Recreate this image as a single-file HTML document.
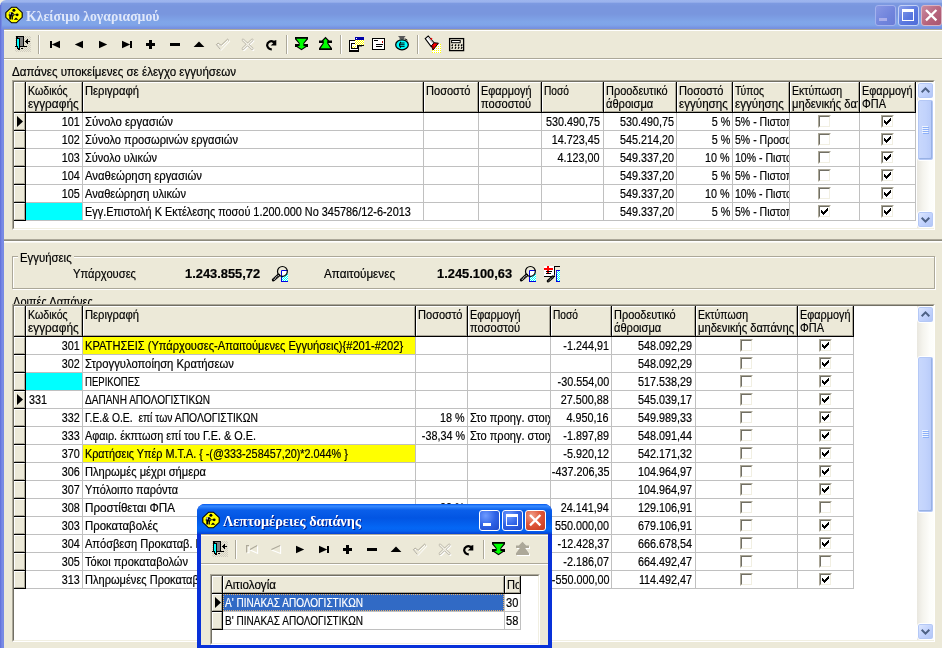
<!DOCTYPE html><html><head><meta charset="utf-8"><title>Κλείσιμο λογαριασμού</title><style>
*{box-sizing:border-box}
html,body{margin:0;padding:0}
body{-webkit-text-stroke:0.2px;width:942px;height:648px;overflow:hidden;position:relative;background:#ECE9D8;font-family:"Liberation Sans",sans-serif;font-size:13px;color:#000}
#root{position:absolute;left:0;top:0;width:942px;height:648px;overflow:hidden;will-change:transform}
.a{position:absolute}
.t{position:absolute;white-space:pre;line-height:15px;height:15px;transform-origin:0 0;transform:scaleX(.85)}
.tr{position:absolute;white-space:pre;line-height:15px;height:15px;transform-origin:100% 0;transform:scaleX(.83);text-align:right}
.b{font-weight:bold;transform:scaleX(.99)}
.ttl{-webkit-text-stroke:0;position:absolute;white-space:nowrap;font-family:"Liberation Serif",serif;font-weight:bold;font-size:15px;line-height:18px;transform-origin:0 0;transform:scaleX(.914)}
.clip{position:absolute;overflow:hidden}
svg{position:absolute;overflow:visible}
.hc{position:absolute;background:#ECE9D8;border:1px solid;border-color:#fff #aca899 #aca899 #fff}
.cb{position:absolute;width:13px;height:13px;background:#fff;border:1px solid;border-color:#aca899 #fff #fff #aca899}
.cb:before{content:"";position:absolute;left:0;top:0;width:9px;height:9px;border:1px solid;border-color:#716f64 #f1efe2 #f1efe2 #716f64}
</style></head><body><div id="root">
<div class="a" style="left:0px;top:0px;width:942px;height:30px;background:#f3f0e4;"></div>
<div class="a" style="left:0px;top:0px;width:942px;height:30px;background:linear-gradient(#9db5ee 0px,#9bb3ed 2px,#7d9ae1 3.5px,#7996de 6px,#7996de 14px,#80a6e9 22px,#7fa4e8 25px,#7691e0 28px,#7590e0 30px);border-top-left-radius:6px"></div>
<div class="a" style="left:0px;top:5px;width:1px;height:25px;background:#6274d8;"></div>
<div class="a" style="left:1px;top:3px;width:1px;height:27px;background:#7488e2;"></div>
<div class="ttl" style="left:26px;top:7px;color:#dfe7fa">Κλείσιμο λογαριασμού</div>
<div class="a" style="left:0px;top:29px;width:4px;height:619px;background:linear-gradient(90deg,#5b68d4 0,#6f80e2 1px,#7c8ee6 3px,#7487e0 4px);"></div>
<div class="a" style="left:4px;top:29px;width:938px;height:1px;background:#aca899;"></div>
<div class="a" style="left:4px;top:30px;width:938px;height:1px;background:#fff;"></div>
<div class="a" style="left:4px;top:58px;width:938px;height:1px;background:#aca899;"></div>
<div class="a" style="left:4px;top:59px;width:938px;height:1px;background:#fff;"></div>
<div class="t" style="left:12px;top:64px;transform:scaleX(0.891);">Δαπάνες υποκείμενες σε έλεγχο εγγυήσεων</div>
<div class="a" style="left:12px;top:80px;width:923px;height:150px;background:#fff;border:1px solid;border-color:#aca899 #fff #fff #aca899"></div>
<div class="a" style="left:13px;top:81px;width:921px;height:148px;background:#fff;border:1px solid;border-color:#716f64 #f1efe2 #f1efe2 #716f64"></div>
<div class="hc" style="left:14px;top:82px;width:11px;height:30px"></div>
<div class="a" style="left:25px;top:82px;width:1px;height:31px;background:#000;"></div>
<div class="hc" style="left:26px;top:82px;width:56px;height:30px"></div>
<div class="a" style="left:82px;top:82px;width:1px;height:31px;background:#000;"></div>
<div class="hc" style="left:83px;top:82px;width:340px;height:30px"></div>
<div class="a" style="left:423px;top:82px;width:1px;height:31px;background:#000;"></div>
<div class="hc" style="left:424px;top:82px;width:54px;height:30px"></div>
<div class="a" style="left:478px;top:82px;width:1px;height:31px;background:#000;"></div>
<div class="hc" style="left:479px;top:82px;width:62px;height:30px"></div>
<div class="a" style="left:541px;top:82px;width:1px;height:31px;background:#000;"></div>
<div class="hc" style="left:542px;top:82px;width:61px;height:30px"></div>
<div class="a" style="left:603px;top:82px;width:1px;height:31px;background:#000;"></div>
<div class="hc" style="left:604px;top:82px;width:72px;height:30px"></div>
<div class="a" style="left:676px;top:82px;width:1px;height:31px;background:#000;"></div>
<div class="hc" style="left:677px;top:82px;width:55px;height:30px"></div>
<div class="a" style="left:732px;top:82px;width:1px;height:31px;background:#000;"></div>
<div class="hc" style="left:733px;top:82px;width:56px;height:30px"></div>
<div class="a" style="left:789px;top:82px;width:1px;height:31px;background:#000;"></div>
<div class="hc" style="left:790px;top:82px;width:69px;height:30px"></div>
<div class="a" style="left:859px;top:82px;width:1px;height:31px;background:#000;"></div>
<div class="hc" style="left:860px;top:82px;width:55px;height:30px"></div>
<div class="a" style="left:915px;top:82px;width:1px;height:31px;background:#000;"></div>
<div class="a" style="left:14px;top:112px;width:902px;height:1px;background:#000;"></div>
<div class="clip" style="left:26px;top:83px;width:55px;height:15px"><div class="t" style="left:2px;top:0;transform:scaleX(0.816);">Κωδικός</div></div>
<div class="clip" style="left:26px;top:96px;width:55px;height:15px"><div class="t" style="left:2px;top:0;transform:scaleX(0.911);">εγγραφής</div></div>
<div class="clip" style="left:83px;top:83px;width:339px;height:15px"><div class="t" style="left:2px;top:0;transform:scaleX(0.863);">Περιγραφή</div></div>
<div class="clip" style="left:424px;top:83px;width:53px;height:15px"><div class="t" style="left:2px;top:0;transform:scaleX(0.85);">Ποσοστό</div></div>
<div class="clip" style="left:479px;top:83px;width:61px;height:15px"><div class="t" style="left:2px;top:0;transform:scaleX(0.835);">Εφαρμογή</div></div>
<div class="clip" style="left:479px;top:96px;width:61px;height:15px"><div class="t" style="left:2px;top:0;transform:scaleX(0.853);">ποσοστού</div></div>
<div class="clip" style="left:542px;top:83px;width:60px;height:15px"><div class="t" style="left:2px;top:0;transform:scaleX(0.784);">Ποσό</div></div>
<div class="clip" style="left:604px;top:83px;width:71px;height:15px"><div class="t" style="left:2px;top:0;transform:scaleX(0.844);">Προοδευτικό</div></div>
<div class="clip" style="left:604px;top:96px;width:71px;height:15px"><div class="t" style="left:2px;top:0;transform:scaleX(0.855);">άθροισμα</div></div>
<div class="clip" style="left:677px;top:83px;width:54px;height:15px"><div class="t" style="left:2px;top:0;transform:scaleX(0.85);">Ποσοστό</div></div>
<div class="clip" style="left:677px;top:96px;width:54px;height:15px"><div class="t" style="left:2px;top:0;transform:scaleX(0.893);">εγγύησης</div></div>
<div class="clip" style="left:733px;top:83px;width:55px;height:15px"><div class="t" style="left:2px;top:0;transform:scaleX(0.801);">Τύπος</div></div>
<div class="clip" style="left:733px;top:96px;width:55px;height:15px"><div class="t" style="left:2px;top:0;transform:scaleX(0.893);">εγγύησης</div></div>
<div class="clip" style="left:790px;top:83px;width:68px;height:15px"><div class="t" style="left:2px;top:0;transform:scaleX(0.812);">Εκτύπωση</div></div>
<div class="clip" style="left:790px;top:96px;width:68px;height:15px"><div class="t" style="left:2px;top:0;transform:scaleX(0.859);">μηδενικής δαπάνης</div></div>
<div class="clip" style="left:860px;top:83px;width:54px;height:15px"><div class="t" style="left:2px;top:0;transform:scaleX(0.835);">Εφαρμογή</div></div>
<div class="clip" style="left:860px;top:96px;width:54px;height:15px"><div class="t" style="left:2px;top:0;transform:scaleX(0.844);">ΦΠΑ</div></div>
<div class="hc" style="left:14px;top:113px;width:11px;height:17px"></div>
<div class="a" style="left:25px;top:113px;width:1px;height:18px;background:#000;"></div>
<div class="a" style="left:14px;top:130px;width:12px;height:1px;background:#000;"></div>
<div class="a" style="left:26px;top:130px;width:890px;height:1px;background:#c0c0c0;"></div>
<div class="hc" style="left:14px;top:131px;width:11px;height:17px"></div>
<div class="a" style="left:25px;top:131px;width:1px;height:18px;background:#000;"></div>
<div class="a" style="left:14px;top:148px;width:12px;height:1px;background:#000;"></div>
<div class="a" style="left:26px;top:148px;width:890px;height:1px;background:#c0c0c0;"></div>
<div class="hc" style="left:14px;top:149px;width:11px;height:17px"></div>
<div class="a" style="left:25px;top:149px;width:1px;height:18px;background:#000;"></div>
<div class="a" style="left:14px;top:166px;width:12px;height:1px;background:#000;"></div>
<div class="a" style="left:26px;top:166px;width:890px;height:1px;background:#c0c0c0;"></div>
<div class="hc" style="left:14px;top:167px;width:11px;height:17px"></div>
<div class="a" style="left:25px;top:167px;width:1px;height:18px;background:#000;"></div>
<div class="a" style="left:14px;top:184px;width:12px;height:1px;background:#000;"></div>
<div class="a" style="left:26px;top:184px;width:890px;height:1px;background:#c0c0c0;"></div>
<div class="hc" style="left:14px;top:185px;width:11px;height:17px"></div>
<div class="a" style="left:25px;top:185px;width:1px;height:18px;background:#000;"></div>
<div class="a" style="left:14px;top:202px;width:12px;height:1px;background:#000;"></div>
<div class="a" style="left:26px;top:202px;width:890px;height:1px;background:#c0c0c0;"></div>
<div class="hc" style="left:14px;top:203px;width:11px;height:17px"></div>
<div class="a" style="left:25px;top:203px;width:1px;height:18px;background:#000;"></div>
<div class="a" style="left:14px;top:220px;width:12px;height:1px;background:#000;"></div>
<div class="a" style="left:26px;top:220px;width:890px;height:1px;background:#c0c0c0;"></div>
<div class="a" style="left:82px;top:113px;width:1px;height:108px;background:#c0c0c0;"></div>
<div class="a" style="left:423px;top:113px;width:1px;height:108px;background:#c0c0c0;"></div>
<div class="a" style="left:478px;top:113px;width:1px;height:108px;background:#c0c0c0;"></div>
<div class="a" style="left:541px;top:113px;width:1px;height:108px;background:#c0c0c0;"></div>
<div class="a" style="left:603px;top:113px;width:1px;height:108px;background:#c0c0c0;"></div>
<div class="a" style="left:676px;top:113px;width:1px;height:108px;background:#c0c0c0;"></div>
<div class="a" style="left:732px;top:113px;width:1px;height:108px;background:#c0c0c0;"></div>
<div class="a" style="left:789px;top:113px;width:1px;height:108px;background:#c0c0c0;"></div>
<div class="a" style="left:859px;top:113px;width:1px;height:108px;background:#c0c0c0;"></div>
<div class="a" style="left:915px;top:113px;width:1px;height:108px;background:#c0c0c0;"></div>
<div class="tr" style="right:862px;top:114px;">101</div>
<div class="t" style="left:85px;top:114px;transform:scaleX(0.875);">Σύνολο εργασιών</div>
<div class="tr" style="right:342px;top:114px;">530.490,75</div>
<div class="tr" style="right:268px;top:114px;">530.490,75</div>
<div class="tr" style="right:212px;top:114px;">5 %</div>
<div class="clip" style="left:733px;top:114px;width:56px;height:15px"><div class="t" style="left:2px;top:0;transform:scaleX(.81)">5% - Πιστοποιήσεις</div></div>
<div class="cb" style="left:818px;top:115px"></div>
<div class="cb" style="left:881px;top:115px"><svg width="7" height="7" style="left:2px;top:2px" viewBox="0 0 7 7" shape-rendering="crispEdges"><path d="M0 2h1v1h1v1h1v-1h1v-1h1v-1h1v-1h1v3h-1v1h-1v1h-1v1h-1v1h-1v-1h-1v-1h-1z" fill="#000"/></svg></div>
<div class="tr" style="right:862px;top:132px;">102</div>
<div class="t" style="left:85px;top:132px;transform:scaleX(0.853);">Σύνολο προσωρινών εργασιών</div>
<div class="tr" style="right:342px;top:132px;">14.723,45</div>
<div class="tr" style="right:268px;top:132px;">545.214,20</div>
<div class="tr" style="right:212px;top:132px;">5 %</div>
<div class="clip" style="left:733px;top:132px;width:56px;height:15px"><div class="t" style="left:2px;top:0;transform:scaleX(.81)">5% - Προσωρινές</div></div>
<div class="cb" style="left:818px;top:133px"></div>
<div class="cb" style="left:881px;top:133px"><svg width="7" height="7" style="left:2px;top:2px" viewBox="0 0 7 7" shape-rendering="crispEdges"><path d="M0 2h1v1h1v1h1v-1h1v-1h1v-1h1v-1h1v3h-1v1h-1v1h-1v1h-1v1h-1v-1h-1v-1h-1z" fill="#000"/></svg></div>
<div class="tr" style="right:862px;top:150px;">103</div>
<div class="t" style="left:85px;top:150px;transform:scaleX(0.844);">Σύνολο υλικών</div>
<div class="tr" style="right:342px;top:150px;">4.123,00</div>
<div class="tr" style="right:268px;top:150px;">549.337,20</div>
<div class="tr" style="right:212px;top:150px;">10 %</div>
<div class="clip" style="left:733px;top:150px;width:56px;height:15px"><div class="t" style="left:2px;top:0;transform:scaleX(.81)">10% - Πιστοποιήσεις</div></div>
<div class="cb" style="left:818px;top:151px"></div>
<div class="cb" style="left:881px;top:151px"><svg width="7" height="7" style="left:2px;top:2px" viewBox="0 0 7 7" shape-rendering="crispEdges"><path d="M0 2h1v1h1v1h1v-1h1v-1h1v-1h1v-1h1v3h-1v1h-1v1h-1v1h-1v1h-1v-1h-1v-1h-1z" fill="#000"/></svg></div>
<div class="tr" style="right:862px;top:168px;">104</div>
<div class="t" style="left:85px;top:168px;transform:scaleX(0.874);">Αναθεώρηση εργασιών</div>
<div class="tr" style="right:268px;top:168px;">549.337,20</div>
<div class="tr" style="right:212px;top:168px;">5 %</div>
<div class="clip" style="left:733px;top:168px;width:56px;height:15px"><div class="t" style="left:2px;top:0;transform:scaleX(.81)">5% - Πιστοποιήσεις</div></div>
<div class="cb" style="left:818px;top:169px"></div>
<div class="cb" style="left:881px;top:169px"><svg width="7" height="7" style="left:2px;top:2px" viewBox="0 0 7 7" shape-rendering="crispEdges"><path d="M0 2h1v1h1v1h1v-1h1v-1h1v-1h1v-1h1v3h-1v1h-1v1h-1v1h-1v1h-1v-1h-1v-1h-1z" fill="#000"/></svg></div>
<div class="tr" style="right:862px;top:186px;">105</div>
<div class="t" style="left:85px;top:186px;transform:scaleX(0.852);">Αναθεώρηση υλικών</div>
<div class="tr" style="right:268px;top:186px;">549.337,20</div>
<div class="tr" style="right:212px;top:186px;">10 %</div>
<div class="clip" style="left:733px;top:186px;width:56px;height:15px"><div class="t" style="left:2px;top:0;transform:scaleX(.81)">10% - Πιστοποιήσεις</div></div>
<div class="cb" style="left:818px;top:187px"></div>
<div class="cb" style="left:881px;top:187px"><svg width="7" height="7" style="left:2px;top:2px" viewBox="0 0 7 7" shape-rendering="crispEdges"><path d="M0 2h1v1h1v1h1v-1h1v-1h1v-1h1v-1h1v3h-1v1h-1v1h-1v1h-1v1h-1v-1h-1v-1h-1z" fill="#000"/></svg></div>
<div class="a" style="left:26px;top:203px;width:56px;height:17px;background:#00ffff;"></div>
<div class="t" style="left:85px;top:204px;transform:scaleX(0.838);">Εγγ.Επιστολή Κ Εκτέλεσης ποσού 1.200.000 Νο 345786/12-6-2013</div>
<div class="tr" style="right:268px;top:204px;">549.337,20</div>
<div class="tr" style="right:212px;top:204px;">5 %</div>
<div class="clip" style="left:733px;top:204px;width:56px;height:15px"><div class="t" style="left:2px;top:0;transform:scaleX(.81)">5% - Πιστοποιήσεις</div></div>
<div class="cb" style="left:818px;top:205px"><svg width="7" height="7" style="left:2px;top:2px" viewBox="0 0 7 7" shape-rendering="crispEdges"><path d="M0 2h1v1h1v1h1v-1h1v-1h1v-1h1v-1h1v3h-1v1h-1v1h-1v1h-1v1h-1v-1h-1v-1h-1z" fill="#000"/></svg></div>
<div class="cb" style="left:881px;top:205px"><svg width="7" height="7" style="left:2px;top:2px" viewBox="0 0 7 7" shape-rendering="crispEdges"><path d="M0 2h1v1h1v1h1v-1h1v-1h1v-1h1v-1h1v3h-1v1h-1v1h-1v1h-1v1h-1v-1h-1v-1h-1z" fill="#000"/></svg></div>
<svg style="left:17px;top:116px" width="6" height="11" viewBox="0 0 6 11"><path d="M0 0L6 5.5L0 11z" fill="#000"/></svg>
<div class="a" style="left:917px;top:82px;width:17px;height:146px;background:linear-gradient(90deg,#e9e7df,#f5f4ee 35%,#fdfdfa 75%,#fefefb);"></div>
<div class="a" style="left:917px;top:82px;width:17px;height:17px;background:linear-gradient(135deg,#e1eafe,#c3d3fd 50%,#b0c4f5);border:1px solid #fff;border-radius:3px;box-shadow:inset 0 0 0 1px #b4c8f6"></div>
<svg style="left:921px;top:87px" width="9" height="6" viewBox="0 0 9 6"><path d="M0.7 5.2L4.5 1.4L8.3 5.2" fill="none" stroke="#4d6185" stroke-width="2"/></svg>
<div class="a" style="left:917px;top:211px;width:17px;height:17px;background:linear-gradient(135deg,#e1eafe,#c3d3fd 50%,#b0c4f5);border:1px solid #fff;border-radius:3px;box-shadow:inset 0 0 0 1px #b4c8f6"></div>
<svg style="left:921px;top:217px" width="9" height="6" viewBox="0 0 9 6"><path d="M0.7 0.8L4.5 4.6L8.3 0.8" fill="none" stroke="#4d6185" stroke-width="2"/></svg>
<div class="a" style="left:917px;top:99px;width:17px;height:62px;background:linear-gradient(90deg,#c9d8fc,#c2d3fc 50%,#b6c9f8);border:1px solid #fff;border-radius:3px;box-shadow:inset 0 0 0 1px #b4c8f6, inset -1px -1px 0 1px #98b1e4"></div>
<div class="a" style="left:922px;top:126px;width:6px;height:1px;background:#eef4fe;"></div>
<div class="a" style="left:923px;top:127px;width:6px;height:1px;background:#8cb0f8;"></div>
<div class="a" style="left:922px;top:128px;width:6px;height:1px;background:#eef4fe;"></div>
<div class="a" style="left:923px;top:129px;width:6px;height:1px;background:#8cb0f8;"></div>
<div class="a" style="left:922px;top:130px;width:6px;height:1px;background:#eef4fe;"></div>
<div class="a" style="left:923px;top:131px;width:6px;height:1px;background:#8cb0f8;"></div>
<div class="a" style="left:922px;top:132px;width:6px;height:1px;background:#eef4fe;"></div>
<div class="a" style="left:923px;top:133px;width:6px;height:1px;background:#8cb0f8;"></div>
<div class="a" style="left:4px;top:239px;width:938px;height:1px;background:#aca899;"></div>
<div class="a" style="left:4px;top:240px;width:938px;height:1px;background:#8c8a7c;"></div>
<div class="a" style="left:4px;top:241px;width:938px;height:1px;background:#fff;"></div>
<div class="a" style="left:4px;top:242px;width:938px;height:1px;background:#f8f7f1;"></div>
<div class="a" style="left:13px;top:257px;width:923px;height:33px;background:transparent;border:1px solid #fff"></div>
<div class="a" style="left:12px;top:256px;width:923px;height:33px;background:transparent;border:1px solid #aca899"></div>
<div class="a" style="left:18px;top:251px;width:56px;height:12px;background:#ECE9D8;"></div>
<div class="t" style="left:20px;top:250px;transform:scaleX(0.875);">Εγγυήσεις</div>
<div class="t" style="left:73px;top:266px;transform:scaleX(0.86);">Υπάρχουσες</div>
<div class="t b" style="left:185px;top:266px;">1.243.855,72</div>
<div class="t" style="left:324px;top:266px;transform:scaleX(0.899);">Απαιτούμενες</div>
<div class="t b" style="left:437px;top:266px;">1.245.100,63</div>
<div class="t" style="left:13px;top:294px;">Λοιπές Δαπάνες</div>
<div class="a" style="left:12px;top:304px;width:923px;height:338px;background:#fff;border:1px solid;border-color:#aca899 #fff #fff #aca899"></div>
<div class="a" style="left:13px;top:305px;width:921px;height:336px;background:#fff;border:1px solid;border-color:#716f64 #f1efe2 #f1efe2 #716f64"></div>
<div class="hc" style="left:14px;top:306px;width:11px;height:30px"></div>
<div class="a" style="left:25px;top:306px;width:1px;height:31px;background:#000;"></div>
<div class="hc" style="left:26px;top:306px;width:56px;height:30px"></div>
<div class="a" style="left:82px;top:306px;width:1px;height:31px;background:#000;"></div>
<div class="hc" style="left:83px;top:306px;width:332px;height:30px"></div>
<div class="a" style="left:415px;top:306px;width:1px;height:31px;background:#000;"></div>
<div class="hc" style="left:416px;top:306px;width:51px;height:30px"></div>
<div class="a" style="left:467px;top:306px;width:1px;height:31px;background:#000;"></div>
<div class="hc" style="left:468px;top:306px;width:82px;height:30px"></div>
<div class="a" style="left:550px;top:306px;width:1px;height:31px;background:#000;"></div>
<div class="hc" style="left:551px;top:306px;width:60px;height:30px"></div>
<div class="a" style="left:611px;top:306px;width:1px;height:31px;background:#000;"></div>
<div class="hc" style="left:612px;top:306px;width:83px;height:30px"></div>
<div class="a" style="left:695px;top:306px;width:1px;height:31px;background:#000;"></div>
<div class="hc" style="left:696px;top:306px;width:101px;height:30px"></div>
<div class="a" style="left:797px;top:306px;width:1px;height:31px;background:#000;"></div>
<div class="hc" style="left:798px;top:306px;width:55px;height:30px"></div>
<div class="a" style="left:853px;top:306px;width:1px;height:31px;background:#000;"></div>
<div class="a" style="left:14px;top:336px;width:840px;height:1px;background:#000;"></div>
<div class="clip" style="left:26px;top:307px;width:55px;height:15px"><div class="t" style="left:2px;top:0;transform:scaleX(0.816);">Κωδικός</div></div>
<div class="clip" style="left:26px;top:320px;width:55px;height:15px"><div class="t" style="left:2px;top:0;transform:scaleX(0.911);">εγγραφής</div></div>
<div class="clip" style="left:83px;top:307px;width:331px;height:15px"><div class="t" style="left:2px;top:0;transform:scaleX(0.863);">Περιγραφή</div></div>
<div class="clip" style="left:416px;top:307px;width:50px;height:15px"><div class="t" style="left:2px;top:0;transform:scaleX(0.85);">Ποσοστό</div></div>
<div class="clip" style="left:468px;top:307px;width:81px;height:15px"><div class="t" style="left:2px;top:0;transform:scaleX(0.835);">Εφαρμογή</div></div>
<div class="clip" style="left:468px;top:320px;width:81px;height:15px"><div class="t" style="left:2px;top:0;transform:scaleX(0.853);">ποσοστού</div></div>
<div class="clip" style="left:551px;top:307px;width:59px;height:15px"><div class="t" style="left:2px;top:0;transform:scaleX(0.784);">Ποσό</div></div>
<div class="clip" style="left:612px;top:307px;width:82px;height:15px"><div class="t" style="left:2px;top:0;transform:scaleX(0.844);">Προοδευτικό</div></div>
<div class="clip" style="left:612px;top:320px;width:82px;height:15px"><div class="t" style="left:2px;top:0;transform:scaleX(0.855);">άθροισμα</div></div>
<div class="clip" style="left:696px;top:307px;width:100px;height:15px"><div class="t" style="left:2px;top:0;transform:scaleX(0.812);">Εκτύπωση</div></div>
<div class="clip" style="left:696px;top:320px;width:100px;height:15px"><div class="t" style="left:2px;top:0;transform:scaleX(0.859);">μηδενικής δαπάνης</div></div>
<div class="clip" style="left:798px;top:307px;width:54px;height:15px"><div class="t" style="left:2px;top:0;transform:scaleX(0.835);">Εφαρμογή</div></div>
<div class="clip" style="left:798px;top:320px;width:54px;height:15px"><div class="t" style="left:2px;top:0;transform:scaleX(0.844);">ΦΠΑ</div></div>
<div class="hc" style="left:14px;top:337px;width:11px;height:17px"></div>
<div class="a" style="left:25px;top:337px;width:1px;height:18px;background:#000;"></div>
<div class="a" style="left:14px;top:354px;width:12px;height:1px;background:#000;"></div>
<div class="a" style="left:26px;top:354px;width:828px;height:1px;background:#c0c0c0;"></div>
<div class="hc" style="left:14px;top:355px;width:11px;height:17px"></div>
<div class="a" style="left:25px;top:355px;width:1px;height:18px;background:#000;"></div>
<div class="a" style="left:14px;top:372px;width:12px;height:1px;background:#000;"></div>
<div class="a" style="left:26px;top:372px;width:828px;height:1px;background:#c0c0c0;"></div>
<div class="hc" style="left:14px;top:373px;width:11px;height:17px"></div>
<div class="a" style="left:25px;top:373px;width:1px;height:18px;background:#000;"></div>
<div class="a" style="left:14px;top:390px;width:12px;height:1px;background:#000;"></div>
<div class="a" style="left:26px;top:390px;width:828px;height:1px;background:#c0c0c0;"></div>
<div class="hc" style="left:14px;top:391px;width:11px;height:17px"></div>
<div class="a" style="left:25px;top:391px;width:1px;height:18px;background:#000;"></div>
<div class="a" style="left:14px;top:408px;width:12px;height:1px;background:#000;"></div>
<div class="a" style="left:26px;top:408px;width:828px;height:1px;background:#c0c0c0;"></div>
<div class="hc" style="left:14px;top:409px;width:11px;height:17px"></div>
<div class="a" style="left:25px;top:409px;width:1px;height:18px;background:#000;"></div>
<div class="a" style="left:14px;top:426px;width:12px;height:1px;background:#000;"></div>
<div class="a" style="left:26px;top:426px;width:828px;height:1px;background:#c0c0c0;"></div>
<div class="hc" style="left:14px;top:427px;width:11px;height:17px"></div>
<div class="a" style="left:25px;top:427px;width:1px;height:18px;background:#000;"></div>
<div class="a" style="left:14px;top:444px;width:12px;height:1px;background:#000;"></div>
<div class="a" style="left:26px;top:444px;width:828px;height:1px;background:#c0c0c0;"></div>
<div class="hc" style="left:14px;top:445px;width:11px;height:17px"></div>
<div class="a" style="left:25px;top:445px;width:1px;height:18px;background:#000;"></div>
<div class="a" style="left:14px;top:462px;width:12px;height:1px;background:#000;"></div>
<div class="a" style="left:26px;top:462px;width:828px;height:1px;background:#c0c0c0;"></div>
<div class="hc" style="left:14px;top:463px;width:11px;height:17px"></div>
<div class="a" style="left:25px;top:463px;width:1px;height:18px;background:#000;"></div>
<div class="a" style="left:14px;top:480px;width:12px;height:1px;background:#000;"></div>
<div class="a" style="left:26px;top:480px;width:828px;height:1px;background:#c0c0c0;"></div>
<div class="hc" style="left:14px;top:481px;width:11px;height:17px"></div>
<div class="a" style="left:25px;top:481px;width:1px;height:18px;background:#000;"></div>
<div class="a" style="left:14px;top:498px;width:12px;height:1px;background:#000;"></div>
<div class="a" style="left:26px;top:498px;width:828px;height:1px;background:#c0c0c0;"></div>
<div class="hc" style="left:14px;top:499px;width:11px;height:17px"></div>
<div class="a" style="left:25px;top:499px;width:1px;height:18px;background:#000;"></div>
<div class="a" style="left:14px;top:516px;width:12px;height:1px;background:#000;"></div>
<div class="a" style="left:26px;top:516px;width:828px;height:1px;background:#c0c0c0;"></div>
<div class="hc" style="left:14px;top:517px;width:11px;height:17px"></div>
<div class="a" style="left:25px;top:517px;width:1px;height:18px;background:#000;"></div>
<div class="a" style="left:14px;top:534px;width:12px;height:1px;background:#000;"></div>
<div class="a" style="left:26px;top:534px;width:828px;height:1px;background:#c0c0c0;"></div>
<div class="hc" style="left:14px;top:535px;width:11px;height:17px"></div>
<div class="a" style="left:25px;top:535px;width:1px;height:18px;background:#000;"></div>
<div class="a" style="left:14px;top:552px;width:12px;height:1px;background:#000;"></div>
<div class="a" style="left:26px;top:552px;width:828px;height:1px;background:#c0c0c0;"></div>
<div class="hc" style="left:14px;top:553px;width:11px;height:17px"></div>
<div class="a" style="left:25px;top:553px;width:1px;height:18px;background:#000;"></div>
<div class="a" style="left:14px;top:570px;width:12px;height:1px;background:#000;"></div>
<div class="a" style="left:26px;top:570px;width:828px;height:1px;background:#c0c0c0;"></div>
<div class="hc" style="left:14px;top:571px;width:11px;height:17px"></div>
<div class="a" style="left:25px;top:571px;width:1px;height:18px;background:#000;"></div>
<div class="a" style="left:14px;top:588px;width:12px;height:1px;background:#000;"></div>
<div class="a" style="left:26px;top:588px;width:828px;height:1px;background:#c0c0c0;"></div>
<div class="a" style="left:82px;top:337px;width:1px;height:252px;background:#c0c0c0;"></div>
<div class="a" style="left:415px;top:337px;width:1px;height:252px;background:#c0c0c0;"></div>
<div class="a" style="left:467px;top:337px;width:1px;height:252px;background:#c0c0c0;"></div>
<div class="a" style="left:550px;top:337px;width:1px;height:252px;background:#c0c0c0;"></div>
<div class="a" style="left:611px;top:337px;width:1px;height:252px;background:#c0c0c0;"></div>
<div class="a" style="left:695px;top:337px;width:1px;height:252px;background:#c0c0c0;"></div>
<div class="a" style="left:797px;top:337px;width:1px;height:252px;background:#c0c0c0;"></div>
<div class="a" style="left:853px;top:337px;width:1px;height:252px;background:#c0c0c0;"></div>
<div class="a" style="left:83px;top:337px;width:332px;height:17px;background:#ffff00;"></div>
<div class="tr" style="right:862px;top:338px;">301</div>
<div class="clip" style="left:83px;top:338px;width:332px;height:15px"><div class="t" style="left:2px;top:0;transform:scaleX(0.855);">ΚΡΑΤΗΣΕΙΣ (Υπάρχουσες-Απαιτούμενες Εγγυήσεις){#201-#202}</div></div>
<div class="clip" style="left:551px;top:338px;width:60px;height:15px"><div class="tr" style="right:2px;top:0">-1.244,91</div></div>
<div class="tr" style="right:250px;top:338px;">548.092,29</div>
<div class="cb" style="left:740px;top:339px"></div>
<div class="cb" style="left:819px;top:339px"><svg width="7" height="7" style="left:2px;top:2px" viewBox="0 0 7 7" shape-rendering="crispEdges"><path d="M0 2h1v1h1v1h1v-1h1v-1h1v-1h1v-1h1v3h-1v1h-1v1h-1v1h-1v1h-1v-1h-1v-1h-1z" fill="#000"/></svg></div>
<div class="tr" style="right:862px;top:356px;">302</div>
<div class="clip" style="left:83px;top:356px;width:332px;height:15px"><div class="t" style="left:2px;top:0;transform:scaleX(0.866);">Στρογγυλοποίηση Κρατήσεων</div></div>
<div class="tr" style="right:250px;top:356px;">548.092,29</div>
<div class="cb" style="left:740px;top:357px"></div>
<div class="cb" style="left:819px;top:357px"><svg width="7" height="7" style="left:2px;top:2px" viewBox="0 0 7 7" shape-rendering="crispEdges"><path d="M0 2h1v1h1v1h1v-1h1v-1h1v-1h1v-1h1v3h-1v1h-1v1h-1v1h-1v1h-1v-1h-1v-1h-1z" fill="#000"/></svg></div>
<div class="a" style="left:26px;top:373px;width:56px;height:17px;background:#00ffff;"></div>
<div class="clip" style="left:83px;top:374px;width:332px;height:15px"><div class="t" style="left:2px;top:0;transform:scaleX(0.735);">ΠΕΡΙΚΟΠΕΣ</div></div>
<div class="clip" style="left:551px;top:374px;width:60px;height:15px"><div class="tr" style="right:2px;top:0">-30.554,00</div></div>
<div class="tr" style="right:250px;top:374px;">517.538,29</div>
<div class="cb" style="left:740px;top:375px"></div>
<div class="cb" style="left:819px;top:375px"><svg width="7" height="7" style="left:2px;top:2px" viewBox="0 0 7 7" shape-rendering="crispEdges"><path d="M0 2h1v1h1v1h1v-1h1v-1h1v-1h1v-1h1v3h-1v1h-1v1h-1v1h-1v1h-1v-1h-1v-1h-1z" fill="#000"/></svg></div>
<div class="t" style="left:29px;top:392px;transform:scaleX(0.83);">331</div>
<div class="clip" style="left:83px;top:392px;width:332px;height:15px"><div class="t" style="left:2px;top:0;transform:scaleX(0.773);">ΔΑΠΑΝΗ ΑΠΟΛΟΓΙΣΤΙΚΩΝ</div></div>
<div class="clip" style="left:551px;top:392px;width:60px;height:15px"><div class="tr" style="right:2px;top:0">27.500,88</div></div>
<div class="tr" style="right:250px;top:392px;">545.039,17</div>
<div class="cb" style="left:740px;top:393px"></div>
<div class="cb" style="left:819px;top:393px"><svg width="7" height="7" style="left:2px;top:2px" viewBox="0 0 7 7" shape-rendering="crispEdges"><path d="M0 2h1v1h1v1h1v-1h1v-1h1v-1h1v-1h1v3h-1v1h-1v1h-1v1h-1v1h-1v-1h-1v-1h-1z" fill="#000"/></svg></div>
<div class="tr" style="right:862px;top:410px;">332</div>
<div class="clip" style="left:83px;top:410px;width:332px;height:15px"><div class="t" style="left:2px;top:0;transform:scaleX(0.795);">Γ.Ε.&amp; Ο.Ε.  επί των ΑΠΟΛΟΓΙΣΤΙΚΩΝ</div></div>
<div class="tr" style="right:477px;top:410px;">18 %</div>
<div class="clip" style="left:468px;top:410px;width:82px;height:15px"><div class="t" style="left:2px;top:0">Στο προηγ. στοιχείο</div></div>
<div class="clip" style="left:551px;top:410px;width:60px;height:15px"><div class="tr" style="right:2px;top:0">4.950,16</div></div>
<div class="tr" style="right:250px;top:410px;">549.989,33</div>
<div class="cb" style="left:740px;top:411px"></div>
<div class="cb" style="left:819px;top:411px"><svg width="7" height="7" style="left:2px;top:2px" viewBox="0 0 7 7" shape-rendering="crispEdges"><path d="M0 2h1v1h1v1h1v-1h1v-1h1v-1h1v-1h1v3h-1v1h-1v1h-1v1h-1v1h-1v-1h-1v-1h-1z" fill="#000"/></svg></div>
<div class="tr" style="right:862px;top:428px;">333</div>
<div class="clip" style="left:83px;top:428px;width:332px;height:15px"><div class="t" style="left:2px;top:0;transform:scaleX(0.834);">Αφαιρ. έκπτωση επί του Γ.Ε. &amp; Ο.Ε.</div></div>
<div class="tr" style="right:477px;top:428px;">-38,34 %</div>
<div class="clip" style="left:468px;top:428px;width:82px;height:15px"><div class="t" style="left:2px;top:0">Στο προηγ. στοιχείο</div></div>
<div class="clip" style="left:551px;top:428px;width:60px;height:15px"><div class="tr" style="right:2px;top:0">-1.897,89</div></div>
<div class="tr" style="right:250px;top:428px;">548.091,44</div>
<div class="cb" style="left:740px;top:429px"></div>
<div class="cb" style="left:819px;top:429px"><svg width="7" height="7" style="left:2px;top:2px" viewBox="0 0 7 7" shape-rendering="crispEdges"><path d="M0 2h1v1h1v1h1v-1h1v-1h1v-1h1v-1h1v3h-1v1h-1v1h-1v1h-1v1h-1v-1h-1v-1h-1z" fill="#000"/></svg></div>
<div class="a" style="left:83px;top:445px;width:332px;height:17px;background:#ffff00;"></div>
<div class="tr" style="right:862px;top:446px;">370</div>
<div class="clip" style="left:83px;top:446px;width:332px;height:15px"><div class="t" style="left:2px;top:0;transform:scaleX(0.832);">Κρατήσεις Υπέρ Μ.Τ.Α. { -(@333-258457,20)*2.044% }</div></div>
<div class="clip" style="left:551px;top:446px;width:60px;height:15px"><div class="tr" style="right:2px;top:0">-5.920,12</div></div>
<div class="tr" style="right:250px;top:446px;">542.171,32</div>
<div class="cb" style="left:740px;top:447px"></div>
<div class="cb" style="left:819px;top:447px"><svg width="7" height="7" style="left:2px;top:2px" viewBox="0 0 7 7" shape-rendering="crispEdges"><path d="M0 2h1v1h1v1h1v-1h1v-1h1v-1h1v-1h1v3h-1v1h-1v1h-1v1h-1v1h-1v-1h-1v-1h-1z" fill="#000"/></svg></div>
<div class="tr" style="right:862px;top:464px;">306</div>
<div class="clip" style="left:83px;top:464px;width:332px;height:15px"><div class="t" style="left:2px;top:0;transform:scaleX(0.856);">Πληρωμές μέχρι σήμερα</div></div>
<div class="clip" style="left:551px;top:464px;width:60px;height:15px"><div class="tr" style="right:2px;top:0">-437.206,35</div></div>
<div class="tr" style="right:250px;top:464px;">104.964,97</div>
<div class="cb" style="left:740px;top:465px"></div>
<div class="cb" style="left:819px;top:465px"><svg width="7" height="7" style="left:2px;top:2px" viewBox="0 0 7 7" shape-rendering="crispEdges"><path d="M0 2h1v1h1v1h1v-1h1v-1h1v-1h1v-1h1v3h-1v1h-1v1h-1v1h-1v1h-1v-1h-1v-1h-1z" fill="#000"/></svg></div>
<div class="tr" style="right:862px;top:482px;">307</div>
<div class="clip" style="left:83px;top:482px;width:332px;height:15px"><div class="t" style="left:2px;top:0;transform:scaleX(0.841);">Υπόλοιπο παρόντα</div></div>
<div class="tr" style="right:250px;top:482px;">104.964,97</div>
<div class="cb" style="left:740px;top:483px"></div>
<div class="cb" style="left:819px;top:483px"><svg width="7" height="7" style="left:2px;top:2px" viewBox="0 0 7 7" shape-rendering="crispEdges"><path d="M0 2h1v1h1v1h1v-1h1v-1h1v-1h1v-1h1v3h-1v1h-1v1h-1v1h-1v1h-1v-1h-1v-1h-1z" fill="#000"/></svg></div>
<div class="tr" style="right:862px;top:500px;">308</div>
<div class="clip" style="left:83px;top:500px;width:332px;height:15px"><div class="t" style="left:2px;top:0;transform:scaleX(0.896);">Προστίθεται ΦΠΑ</div></div>
<div class="tr" style="right:477px;top:500px;">23 %</div>
<div class="clip" style="left:551px;top:500px;width:60px;height:15px"><div class="tr" style="right:2px;top:0">24.141,94</div></div>
<div class="tr" style="right:250px;top:500px;">129.106,91</div>
<div class="cb" style="left:740px;top:501px"></div>
<div class="cb" style="left:819px;top:501px"></div>
<div class="tr" style="right:862px;top:518px;">303</div>
<div class="clip" style="left:83px;top:518px;width:332px;height:15px"><div class="t" style="left:2px;top:0;transform:scaleX(0.876);">Προκαταβολές</div></div>
<div class="clip" style="left:551px;top:518px;width:60px;height:15px"><div class="tr" style="right:2px;top:0">550.000,00</div></div>
<div class="tr" style="right:250px;top:518px;">679.106,91</div>
<div class="cb" style="left:740px;top:519px"></div>
<div class="cb" style="left:819px;top:519px"><svg width="7" height="7" style="left:2px;top:2px" viewBox="0 0 7 7" shape-rendering="crispEdges"><path d="M0 2h1v1h1v1h1v-1h1v-1h1v-1h1v-1h1v3h-1v1h-1v1h-1v1h-1v1h-1v-1h-1v-1h-1z" fill="#000"/></svg></div>
<div class="tr" style="right:862px;top:536px;">304</div>
<div class="clip" style="left:83px;top:536px;width:332px;height:15px"><div class="t" style="left:2px;top:0;">Απόσβεση Προκαταβ. Προηγ.</div></div>
<div class="clip" style="left:551px;top:536px;width:60px;height:15px"><div class="tr" style="right:2px;top:0">-12.428,37</div></div>
<div class="tr" style="right:250px;top:536px;">666.678,54</div>
<div class="cb" style="left:740px;top:537px"></div>
<div class="cb" style="left:819px;top:537px"><svg width="7" height="7" style="left:2px;top:2px" viewBox="0 0 7 7" shape-rendering="crispEdges"><path d="M0 2h1v1h1v1h1v-1h1v-1h1v-1h1v-1h1v3h-1v1h-1v1h-1v1h-1v1h-1v-1h-1v-1h-1z" fill="#000"/></svg></div>
<div class="tr" style="right:862px;top:554px;">305</div>
<div class="clip" style="left:83px;top:554px;width:332px;height:15px"><div class="t" style="left:2px;top:0;transform:scaleX(0.85);">Τόκοι προκαταβολών</div></div>
<div class="clip" style="left:551px;top:554px;width:60px;height:15px"><div class="tr" style="right:2px;top:0">-2.186,07</div></div>
<div class="tr" style="right:250px;top:554px;">664.492,47</div>
<div class="cb" style="left:740px;top:555px"></div>
<div class="cb" style="left:819px;top:555px"></div>
<div class="tr" style="right:862px;top:572px;">313</div>
<div class="clip" style="left:83px;top:572px;width:332px;height:15px"><div class="t" style="left:2px;top:0;">Πληρωμένες Προκαταβολές</div></div>
<div class="clip" style="left:551px;top:572px;width:60px;height:15px"><div class="tr" style="right:2px;top:0">-550.000,00</div></div>
<div class="tr" style="right:250px;top:572px;">114.492,47</div>
<div class="cb" style="left:740px;top:573px"></div>
<div class="cb" style="left:819px;top:573px"><svg width="7" height="7" style="left:2px;top:2px" viewBox="0 0 7 7" shape-rendering="crispEdges"><path d="M0 2h1v1h1v1h1v-1h1v-1h1v-1h1v-1h1v3h-1v1h-1v1h-1v1h-1v1h-1v-1h-1v-1h-1z" fill="#000"/></svg></div>
<svg style="left:17px;top:394px" width="6" height="11" viewBox="0 0 6 11"><path d="M0 0L6 5.5L0 11z" fill="#000"/></svg>
<div class="a" style="left:917px;top:306px;width:17px;height:334px;background:linear-gradient(90deg,#e9e7df,#f5f4ee 35%,#fdfdfa 75%,#fefefb);"></div>
<div class="a" style="left:917px;top:306px;width:17px;height:17px;background:linear-gradient(135deg,#e1eafe,#c3d3fd 50%,#b0c4f5);border:1px solid #fff;border-radius:3px;box-shadow:inset 0 0 0 1px #b4c8f6"></div>
<svg style="left:921px;top:311px" width="9" height="6" viewBox="0 0 9 6"><path d="M0.7 5.2L4.5 1.4L8.3 5.2" fill="none" stroke="#4d6185" stroke-width="2"/></svg>
<div class="a" style="left:917px;top:623px;width:17px;height:17px;background:linear-gradient(135deg,#e1eafe,#c3d3fd 50%,#b0c4f5);border:1px solid #fff;border-radius:3px;box-shadow:inset 0 0 0 1px #b4c8f6"></div>
<svg style="left:921px;top:629px" width="9" height="6" viewBox="0 0 9 6"><path d="M0.7 0.8L4.5 4.6L8.3 0.8" fill="none" stroke="#4d6185" stroke-width="2"/></svg>
<div class="a" style="left:917px;top:356px;width:17px;height:157px;background:linear-gradient(90deg,#c9d8fc,#c2d3fc 50%,#b6c9f8);border:1px solid #fff;border-radius:3px;box-shadow:inset 0 0 0 1px #b4c8f6, inset -1px -1px 0 1px #98b1e4"></div>
<div class="a" style="left:922px;top:430px;width:6px;height:1px;background:#eef4fe;"></div>
<div class="a" style="left:923px;top:431px;width:6px;height:1px;background:#8cb0f8;"></div>
<div class="a" style="left:922px;top:432px;width:6px;height:1px;background:#eef4fe;"></div>
<div class="a" style="left:923px;top:433px;width:6px;height:1px;background:#8cb0f8;"></div>
<div class="a" style="left:922px;top:434px;width:6px;height:1px;background:#eef4fe;"></div>
<div class="a" style="left:923px;top:435px;width:6px;height:1px;background:#8cb0f8;"></div>
<div class="a" style="left:922px;top:436px;width:6px;height:1px;background:#eef4fe;"></div>
<div class="a" style="left:923px;top:437px;width:6px;height:1px;background:#8cb0f8;"></div>
<div class="a" style="left:875px;top:5px;width:21px;height:21px;background:linear-gradient(135deg,#8898e4,#7084dc 60%,#6a7cd6);border:1px solid #a3b2ee;border-radius:3px"></div>
<div class="a" style="left:879px;top:18px;width:8px;height:3px;background:#a9aeea;"></div>
<div class="a" style="left:898px;top:5px;width:21px;height:21px;background:linear-gradient(135deg,#8aa0ea,#5a78e0 55%,#4f6cd8);border:1px solid #c4d2f6;border-radius:3px"></div>
<div class="a" style="left:902px;top:9px;width:12px;height:12px;background:transparent;border:1px solid #fff;border-top-width:3px"></div>
<div class="a" style="left:921px;top:5px;width:21px;height:21px;background:linear-gradient(135deg,#c98b9f,#b5617a 60%,#a9566f);border:1px solid #d9b4c2;border-radius:3px"></div>
<svg style="left:921px;top:5px" width="21" height="21"><path d="M5 5L15.4 15.4M15.4 5L5 15.4" stroke="#fff" stroke-width="2.3" stroke-linecap="butt"/></svg>
<div class="a" style="left:197px;top:504px;width:355px;height:144px;background:#0831d9;border-radius:8px 8px 0 0"></div>
<div class="a" style="left:197px;top:504px;width:355px;height:30px;background:linear-gradient(#0058ee 0,#3a8cff 2px,#0a5fea 6px,#0255e3 14px,#0467f5 24px,#0562f0 27px,#0340d4 30px);border-radius:8px 8px 0 0"></div>
<div class="a" style="left:201px;top:534px;width:347px;height:111px;background:#ECE9D8;"></div>
<div class="ttl" style="left:223px;top:512px;transform:scaleX(0.954);color:#fff;text-shadow:1px 1px 0 #0a1883">Λεπτομέρειες δαπάνης</div>
<div class="a" style="left:201px;top:534px;width:347px;height:1px;background:#aca899;"></div>
<div class="a" style="left:201px;top:535px;width:347px;height:1px;background:#fff;"></div>
<div class="a" style="left:201px;top:563px;width:347px;height:1px;background:#aca899;"></div>
<div class="a" style="left:201px;top:564px;width:347px;height:1px;background:#fff;"></div>
<div class="a" style="left:479px;top:510px;width:21px;height:21px;background:radial-gradient(circle at 30% 25%,#6f9bff 0,#2f62e6 50%,#1f49c8 100%);border:1px solid #fff;border-radius:3px"></div>
<div class="a" style="left:483px;top:523px;width:8px;height:3px;background:#fff;"></div>
<div class="a" style="left:502px;top:510px;width:21px;height:21px;background:radial-gradient(circle at 30% 25%,#6f9bff 0,#2f62e6 50%,#1f49c8 100%);border:1px solid #fff;border-radius:3px"></div>
<div class="a" style="left:506px;top:514px;width:12px;height:12px;background:transparent;border:1px solid #fff;border-top-width:3px"></div>
<div class="a" style="left:525px;top:510px;width:21px;height:21px;background:radial-gradient(circle at 30% 25%,#f0a08a 0,#e0573a 45%,#c4381c 100%);border:1px solid #fff;border-radius:3px"></div>
<svg style="left:525px;top:510px" width="21" height="21"><path d="M5 5L15.4 15.4M15.4 5L5 15.4" stroke="#fff" stroke-width="2.3" stroke-linecap="butt"/></svg>
<div class="a" style="left:210px;top:574px;width:330px;height:71px;background:#fff;border:1px solid;border-color:#aca899 #fff #fff #aca899"></div>
<div class="a" style="left:211px;top:575px;width:328px;height:69px;background:#fff;border:1px solid;border-color:#716f64 #f1efe2 #f1efe2 #716f64"></div>
<div class="hc" style="left:212px;top:576px;width:10px;height:17px"></div>
<div class="a" style="left:222px;top:576px;width:1px;height:18px;background:#000;"></div>
<div class="hc" style="left:223px;top:576px;width:281px;height:17px"></div>
<div class="a" style="left:504px;top:576px;width:1px;height:18px;background:#000;"></div>
<div class="hc" style="left:505px;top:576px;width:15px;height:17px"></div>
<div class="a" style="left:520px;top:576px;width:1px;height:18px;background:#000;"></div>
<div class="a" style="left:212px;top:593px;width:309px;height:1px;background:#000;"></div>
<div class="t" style="left:225px;top:577px;transform:scaleX(0.894);">Αιτιολογία</div>
<div class="clip" style="left:505px;top:577px;width:14px;height:15px"><div class="t" style="left:2px;top:0">Πο</div></div>
<div class="hc" style="left:212px;top:594px;width:10px;height:17px"></div>
<div class="a" style="left:222px;top:594px;width:1px;height:18px;background:#000;"></div>
<div class="a" style="left:212px;top:611px;width:11px;height:1px;background:#000;"></div>
<div class="a" style="left:223px;top:611px;width:298px;height:1px;background:#c0c0c0;"></div>
<div class="hc" style="left:212px;top:612px;width:10px;height:17px"></div>
<div class="a" style="left:222px;top:612px;width:1px;height:18px;background:#000;"></div>
<div class="a" style="left:212px;top:629px;width:11px;height:1px;background:#000;"></div>
<div class="a" style="left:223px;top:629px;width:298px;height:1px;background:#c0c0c0;"></div>
<div class="a" style="left:504px;top:594px;width:1px;height:36px;background:#c0c0c0;"></div>
<div class="a" style="left:520px;top:594px;width:1px;height:36px;background:#c0c0c0;"></div>
<div class="a" style="left:223px;top:594px;width:281px;height:17px;background:#316ac5;outline:1px dotted #e6b06a;outline-offset:-1px"></div>
<div class="t" style="left:225px;top:595px;transform:scaleX(0.772);color:#fff">Α&#x27; ΠΙΝΑΚΑΣ ΑΠΟΛΟΓΙΣΤΙΚΩΝ</div>
<div class="t" style="left:225px;top:613px;transform:scaleX(0.772);">Β&#x27; ΠΙΝΑΚΑΣ ΑΠΟΛΟΓΙΣΤΙΚΩΝ</div>
<div class="t" style="left:506px;top:595px;">30</div>
<div class="t" style="left:506px;top:613px;">58</div>
<svg style="left:215px;top:597px" width="6" height="11" viewBox="0 0 6 11"><path d="M0 0L6 5.5L0 11z" fill="#000"/></svg>
<svg style="left:0;top:0" width="942" height="648" viewBox="0 0 942 648"><defs>
<pattern id="dith" width="2" height="2" patternUnits="userSpaceOnUse"><rect width="2" height="2" fill="#ECE9D8"/><rect width="1" height="1" fill="#d2cec0"/><rect x="1" y="1" width="1" height="1" fill="#d2cec0"/></pattern>
<pattern id="ydith" width="2" height="2" patternUnits="userSpaceOnUse"><rect width="2" height="2" fill="#ffff00"/><rect width="1" height="1" fill="#fff"/><rect x="1" y="1" width="1" height="1" fill="#fff"/></pattern>
<pattern id="ldith" width="2" height="2" patternUnits="userSpaceOnUse"><rect width="2" height="2" fill="#fff"/><rect width="1" height="1" fill="#ffff00"/></pattern>
<pattern id="cdith" width="2" height="2" patternUnits="userSpaceOnUse"><rect width="2" height="2" fill="#00ffff"/><rect width="1" height="1" fill="#fff"/><rect x="1" y="1" width="1" height="1" fill="#fff"/></pattern>
</defs>
<g>
<polygon points="11.6,7.2 16.4,7.2 22.2,12.7 22.2,17.3 16.4,22.8 11.6,22.8 5.8,17.3 5.8,12.7" fill="#ffff00" stroke="#000" stroke-width="1.1"/>
<circle cx="13.9" cy="10.2" r="1.5" fill="#000"/>
<path d="M9.3 12.2h3.3l1.2 1.4v2.4l-0.9 0.4v3.1h-1.3v-3h-0.5v3h-1.8z" fill="#000"/>
<path d="M9.4 12.3h1.5v2.1h-1.5z" fill="#d8d8d8"/>
<path d="M8.6 14.6h1.2v0.8h-1.2z" fill="#000"/>
<path d="M12.6 14.4h3.4v0.8h-3.4z" fill="#000"/>
<path d="M12.4 14.3h1v1h-1z" fill="#d8d8d8"/>
<circle cx="17.2" cy="14.8" r="1.4" fill="#000"/>
<path d="M13.8 19.8l2.2-2.2l2.4 2.2z" fill="#000"/>
</g>
<g transform="translate(15,36)" shape-rendering="crispEdges"><rect x="0" y="0" width="16" height="16" fill="url(#dith)"/><rect x="1" y="0" width="8" height="2" fill="#000"/><rect x="1" y="0" width="1" height="11" fill="#000"/><rect x="8" y="0" width="1" height="11" fill="#000"/><rect x="3" y="1" width="5" height="9" fill="#808080"/><rect x="0" y="10" width="12" height="1" fill="#000"/><polygon points="2,3 4,3 4,12 3,12 3,11 2,10" fill="#00ffff"/><rect x="4" y="2" width="1" height="12" fill="#000"/><rect x="2" y="2" width="2" height="1" fill="#000"/><polygon points="1,10 2,10 4,13 4,14 3,14" fill="#000"/><rect x="6" y="12" width="2" height="1" fill="#000"/><rect x="10" y="5" width="5" height="1" fill="#000"/><rect x="11" y="4" width="2" height="3" fill="#000"/><rect x="12" y="3" width="1" height="5" fill="#000"/></g><g shape-rendering="crispEdges"><rect x="38" y="35" width="1" height="19" fill="#aca899"/><rect x="39" y="35" width="1" height="19" fill="#fff"/></g><rect x="50" y="41" width="2" height="7" fill="#000" shape-rendering="crispEdges"/><polygon points="60,40.8 60,48.2 51.8,44.5" fill="#000"/><polygon points="83,40.8 83,48.2 74.8,44.5" fill="#000"/><polygon points="99,40.8 99,48.2 107.2,44.5" fill="#000"/><polygon points="122,40.8 122,48.2 130.2,44.5" fill="#000"/><rect x="130" y="41" width="2" height="7" fill="#000" shape-rendering="crispEdges"/><g fill="#000" shape-rendering="crispEdges"><rect x="146" y="43" width="9" height="3"/><rect x="149" y="40" width="3" height="9"/></g><rect x="170" y="43" width="10" height="3" fill="#000" shape-rendering="crispEdges"/><polygon points="193.6,47 204.4,47 199,41.4" fill="#000"/><g fill="none" stroke-width="1" stroke-linejoin="round"><polygon stroke="#fff" transform="translate(0.8,0.8)" points="216.4,44.6 218.2,43.2 221.1,45.3 227.5,39.2 229,40.5 220.4,49.6"/><path stroke="#aca899" d="M220.4 49.4L216.4 44.6L218.2 43.2L221.1 45.3L227.5 39.2L229 40.5"/></g><g fill="none" stroke-linecap="round"><path d="M243 40L252.2 48.8M252.2 40L243 48.8" stroke="#fff" stroke-width="2.4" transform="translate(1,1)"/><path d="M243 40L252.2 48.8M252.2 40L243 48.8" stroke="#b5b1a2" stroke-width="2.6"/><path d="M243 40L252.2 48.8M252.2 40L243 48.8" stroke="#f4f2e8" stroke-width="1.3"/></g><path d="M273.4 41.8A4.2 4.2 0 0 0 267.1 45.2A4.7 4.7 0 0 0 271.8 49.3" fill="none" stroke="#000" stroke-width="2.2"/><polygon points="276.3,40 276.3,45.4 270.6,45.4 273.2,43.2 271.6,41.6" fill="#000"/><g shape-rendering="crispEdges"><rect x="286" y="35" width="1" height="19" fill="#aca899"/><rect x="287" y="35" width="1" height="19" fill="#fff"/></g><g transform="translate(295,37)"><polygon points="0,0 13,0 13,2.2 9.2,6.4 9.2,6.9 13,6.9 13,9.9 11.4,9.9 6.5,13.3 1.6,9.9 0,9.9 0,6.9 3.8,6.9 3.8,6.4 0,2.2" fill="#000"/><polygon points="1.3,1.8 11.7,1.8 8.4,5.9 8.4,9.1 10.6,9.2 6.5,12 2.4,9.2 4.6,9.1 4.6,5.9" fill="#00ff00"/></g><g transform="translate(319,37)"><polygon points="6.5,-0.2 10.2,3.5 13,3.5 13,5.9 9.2,5.9 13,11.2 13,13 0,13 0,11.2 3.8,5.9 0,5.9 0,3.5 2.8,3.5" fill="#000"/><polygon points="6.5,1.5 8.8,3.9 8.2,4.2 8.2,6.3 11.3,11.3 1.7,11.3 4.8,6.3 4.8,4.2 4.2,3.9" fill="#00ff00"/></g><g shape-rendering="crispEdges"><rect x="340" y="35" width="1" height="19" fill="#aca899"/><rect x="341" y="35" width="1" height="19" fill="#fff"/></g><g transform="translate(349,37)" shape-rendering="crispEdges"><rect x="0" y="3" width="10" height="12" fill="#000"/><rect x="1" y="4" width="8" height="9" fill="#fff"/><rect x="2" y="6" width="7" height="6" fill="#000"/><rect x="3" y="7" width="5" height="4" fill="#fff"/><rect x="3" y="9" width="4" height="2" fill="url(#ydith)"/><rect x="6" y="0" width="9" height="3" fill="#0000a8"/><rect x="7" y="1" width="1" height="1" fill="#fff"/><rect x="6" y="3" width="9" height="5" fill="url(#ydith)"/><rect x="8" y="8" width="7" height="1" fill="#000"/><rect x="10" y="9" width="3" height="1" fill="#808080"/></g><g transform="translate(372,38)" shape-rendering="crispEdges"><rect x="0" y="0" width="13" height="12" fill="#000"/><rect x="1" y="1" width="11" height="10" fill="#fff"/><rect x="2" y="2" width="4" height="1" fill="#000"/><rect x="10" y="3" width="1" height="2" fill="#c00000"/><rect x="4" y="6" width="7" height="1" fill="#000"/><rect x="4" y="8" width="6" height="1" fill="#000"/></g><g><polygon points="398,36 405.6,36 404,38 404.6,39.6 399.4,39.6 399.8,38" fill="#585858"/><path d="M404.8 38.8l2.6 1.4" stroke="#000" stroke-width="1"/><ellipse cx="402" cy="44.8" rx="6.3" ry="5" fill="#00ffff" stroke="#000" stroke-width="1.3"/><g stroke="#000" stroke-width="0.9" fill="none"><path d="M400 43h4.6M399.4 44.7h5.2M400 46.4h4.6"/><path d="M400.8 41.9q-2.4 2.9 0 5.8" stroke-width="1.1"/></g></g><g shape-rendering="crispEdges"><rect x="417" y="35" width="1" height="19" fill="#aca899"/><rect x="418" y="35" width="1" height="19" fill="#fff"/></g><g><polygon points="433,46 440.5,44 440.5,52.5 432,52.5" fill="url(#ldith)" shape-rendering="crispEdges"/><polygon points="425.2,38.6 428.2,36 434.6,43.4 431.2,46.6" fill="#fff" stroke="#000" stroke-width="1.1"/><polygon points="427.8,38.2 428.8,37.4 434,43.6 433,44.4" fill="#c8c8c8"/><polygon points="431.4,45.6 434.4,42.8 438.4,43.2 433,50" fill="#ff0000" stroke="#000" stroke-width="1"/><polygon points="432,46.4 433.4,45 433.6,48.6 432.8,49.4" fill="#800000"/><rect x="431" y="37.6" width="1.6" height="1.6" fill="#ff0000" transform="rotate(40 431 38)"/></g><g transform="translate(449,38)"><rect x="0.6" y="0.6" width="14" height="12" fill="none" stroke="#000" stroke-width="1.3"/><rect x="2.6" y="2.5" width="8.6" height="2.2" fill="#fff" stroke="#000" stroke-width="1"/><path d="M3.6999999999999997 6.4l-0.9 1.7" stroke="#000" stroke-width="1.3"/><path d="M7.0 6.4l-0.9 1.7" stroke="#000" stroke-width="1.3"/><path d="M10.1 6.4l-0.9 1.7" stroke="#000" stroke-width="1.3"/><path d="M13.1 6.4l-0.9 1.7" stroke="#000" stroke-width="1.3"/><path d="M3.6999999999999997 9l-0.9 1.7" stroke="#000" stroke-width="1.3"/><path d="M7.0 9l-0.9 1.7" stroke="#000" stroke-width="1.3"/><path d="M10.1 9l-0.9 1.7" stroke="#000" stroke-width="1.3"/><path d="M13.1 9l-0.9 1.7" stroke="#000" stroke-width="1.3"/></g>
<g transform="translate(272,266)"><g shape-rendering="crispEdges"><rect x="9" y="4" width="7" height="12" fill="url(#cdith)"/><rect x="9" y="4" width="1" height="12" fill="#0000e0"/><rect x="9" y="4" width="7" height="1" fill="#0000e0"/><rect x="9" y="15" width="7" height="1" fill="#0000e0"/></g><circle cx="10.4" cy="5.4" r="4.9" fill="#ECE9D8"/><path d="M9.9 5v5.2h2.5l3.4-4.4v-0.8z" fill="#fff"/><path d="M9.5 4.6v5.4" stroke="#0000e0" stroke-width="1"/><path d="M9.5 4.5h5.4" stroke="#0000e0" stroke-width="1"/><circle cx="10.4" cy="5.4" r="4.9" fill="none" stroke="#000" stroke-width="1.2"/><path d="M6.6 9.3L1.4 13.9" stroke="#000" stroke-width="3.2" stroke-linecap="round"/><path d="M6.6 9.3L1.6 13.7" stroke="#fff" stroke-width="1.1" stroke-dasharray="1 0.8"/></g>
<g transform="translate(520,266)"><g shape-rendering="crispEdges"><rect x="9" y="4" width="7" height="12" fill="url(#cdith)"/><rect x="9" y="4" width="1" height="12" fill="#0000e0"/><rect x="9" y="4" width="7" height="1" fill="#0000e0"/><rect x="9" y="15" width="7" height="1" fill="#0000e0"/></g><circle cx="10.4" cy="5.4" r="4.9" fill="#ECE9D8"/><path d="M9.9 5v5.2h2.5l3.4-4.4v-0.8z" fill="#fff"/><path d="M9.5 4.6v5.4" stroke="#0000e0" stroke-width="1"/><path d="M9.5 4.5h5.4" stroke="#0000e0" stroke-width="1"/><circle cx="10.4" cy="5.4" r="4.9" fill="none" stroke="#000" stroke-width="1.2"/><path d="M6.6 9.3L1.4 13.9" stroke="#000" stroke-width="3.2" stroke-linecap="round"/><path d="M6.6 9.3L1.6 13.7" stroke="#fff" stroke-width="1.1" stroke-dasharray="1 0.8"/></g>
<g transform="translate(544,266)"><rect x="0" y="0" width="10.5" height="10" fill="#fff"/><g shape-rendering="crispEdges"><rect x="12" y="4" width="4" height="12" fill="url(#cdith)"/><rect x="12" y="4" width="1" height="12" fill="#0000e0"/><rect x="12" y="4" width="4" height="1" fill="#0000e0"/><rect x="12" y="15" width="4" height="1" fill="#0000e0"/></g><g shape-rendering="crispEdges"><rect x="0" y="2" width="9" height="2" fill="#ff0000"/><rect x="3" y="0" width="2" height="7" fill="#ff0000"/><rect x="2" y="5" width="6" height="1" fill="#000"/><rect x="2" y="7" width="5" height="1" fill="#000"/><rect x="0" y="10" width="11" height="1" fill="#000"/><rect x="10" y="0" width="1.4" height="11" fill="#000"/><rect x="11" y="0" width="5" height="1.4" fill="#000"/></g><path d="M12 4.5q1 4 -1.5 5.6" fill="#fff" stroke="none"/><path d="M8.8 10.8L4.2 15" stroke="#000" stroke-width="3" stroke-linecap="round"/><path d="M8.4 11.4L4.6 14.8" stroke="#fff" stroke-width="1" stroke-dasharray="1 1"/></g>
<g transform="translate(197,505)"><g>
<polygon points="11.6,7.2 16.4,7.2 22.2,12.7 22.2,17.3 16.4,22.8 11.6,22.8 5.8,17.3 5.8,12.7" fill="#ffff00" stroke="#000" stroke-width="1.1"/>
<circle cx="13.9" cy="10.2" r="1.5" fill="#000"/>
<path d="M9.3 12.2h3.3l1.2 1.4v2.4l-0.9 0.4v3.1h-1.3v-3h-0.5v3h-1.8z" fill="#000"/>
<path d="M9.4 12.3h1.5v2.1h-1.5z" fill="#d8d8d8"/>
<path d="M8.6 14.6h1.2v0.8h-1.2z" fill="#000"/>
<path d="M12.6 14.4h3.4v0.8h-3.4z" fill="#000"/>
<path d="M12.4 14.3h1v1h-1z" fill="#d8d8d8"/>
<circle cx="17.2" cy="14.8" r="1.4" fill="#000"/>
<path d="M13.8 19.8l2.2-2.2l2.4 2.2z" fill="#000"/>
</g></g>
<g transform="translate(197,505)"><g transform="translate(15,36)" shape-rendering="crispEdges"><rect x="0" y="0" width="16" height="16" fill="url(#dith)"/><rect x="1" y="0" width="8" height="2" fill="#000"/><rect x="1" y="0" width="1" height="11" fill="#000"/><rect x="8" y="0" width="1" height="11" fill="#000"/><rect x="3" y="1" width="5" height="9" fill="#808080"/><rect x="0" y="10" width="12" height="1" fill="#000"/><polygon points="2,3 4,3 4,12 3,12 3,11 2,10" fill="#00ffff"/><rect x="4" y="2" width="1" height="12" fill="#000"/><rect x="2" y="2" width="2" height="1" fill="#000"/><polygon points="1,10 2,10 4,13 4,14 3,14" fill="#000"/><rect x="6" y="12" width="2" height="1" fill="#000"/><rect x="10" y="5" width="5" height="1" fill="#000"/><rect x="11" y="4" width="2" height="3" fill="#000"/><rect x="12" y="3" width="1" height="5" fill="#000"/></g><g shape-rendering="crispEdges"><rect x="38" y="35" width="1" height="19" fill="#aca899"/><rect x="39" y="35" width="1" height="19" fill="#fff"/></g><g fill="none" stroke-width="1.1"><path stroke="#fff" d="M52 41.2V47.8H49.6M60.6 40.6V48.4L53.2 44.9"/><path stroke="#aca899" d="M49.6 47.6V40.6H52M53 44.4L60.2 40.6"/></g><g fill="none" stroke-width="1.1"><path stroke="#fff" d="M83.6 40.6V48.4L74.6 44.9"/><path stroke="#aca899" d="M74.4 44.4L83.2 40.6"/></g><polygon points="99,40.8 99,48.2 107.2,44.5" fill="#000"/><polygon points="122,40.8 122,48.2 130.2,44.5" fill="#000"/><rect x="130" y="41" width="2" height="7" fill="#000" shape-rendering="crispEdges"/><g fill="#000" shape-rendering="crispEdges"><rect x="146" y="43" width="9" height="3"/><rect x="149" y="40" width="3" height="9"/></g><rect x="170" y="43" width="10" height="3" fill="#000" shape-rendering="crispEdges"/><polygon points="193.6,47 204.4,47 199,41.4" fill="#000"/><g fill="none" stroke-width="1" stroke-linejoin="round"><polygon stroke="#fff" transform="translate(0.8,0.8)" points="216.4,44.6 218.2,43.2 221.1,45.3 227.5,39.2 229,40.5 220.4,49.6"/><path stroke="#aca899" d="M220.4 49.4L216.4 44.6L218.2 43.2L221.1 45.3L227.5 39.2L229 40.5"/></g><g fill="none" stroke-linecap="round"><path d="M243 40L252.2 48.8M252.2 40L243 48.8" stroke="#fff" stroke-width="2.4" transform="translate(1,1)"/><path d="M243 40L252.2 48.8M252.2 40L243 48.8" stroke="#b5b1a2" stroke-width="2.6"/><path d="M243 40L252.2 48.8M252.2 40L243 48.8" stroke="#f4f2e8" stroke-width="1.3"/></g><path d="M273.4 41.8A4.2 4.2 0 0 0 267.1 45.2A4.7 4.7 0 0 0 271.8 49.3" fill="none" stroke="#000" stroke-width="2.2"/><polygon points="276.3,40 276.3,45.4 270.6,45.4 273.2,43.2 271.6,41.6" fill="#000"/><g shape-rendering="crispEdges"><rect x="286" y="35" width="1" height="19" fill="#aca899"/><rect x="287" y="35" width="1" height="19" fill="#fff"/></g><g transform="translate(295,37)"><polygon points="0,0 13,0 13,2.2 9.2,6.4 9.2,6.9 13,6.9 13,9.9 11.4,9.9 6.5,13.3 1.6,9.9 0,9.9 0,6.9 3.8,6.9 3.8,6.4 0,2.2" fill="#000"/><polygon points="1.3,1.8 11.7,1.8 8.4,5.9 8.4,9.1 10.6,9.2 6.5,12 2.4,9.2 4.6,9.1 4.6,5.9" fill="#00ff00"/></g><g transform="translate(319,37)"><polygon points="6.5,-0.2 10.2,3.5 13,3.5 13,5.9 9.2,5.9 13,11.2 13,13 0,13 0,11.2 3.8,5.9 0,5.9 0,3.5 2.8,3.5" fill="#fff" transform="translate(1,1)"/><polygon points="6.5,-0.2 10.2,3.5 13,3.5 13,5.9 9.2,5.9 13,11.2 13,13 0,13 0,11.2 3.8,5.9 0,5.9 0,3.5 2.8,3.5" fill="#aca899"/></g></g>
</svg>
</div></body></html>
